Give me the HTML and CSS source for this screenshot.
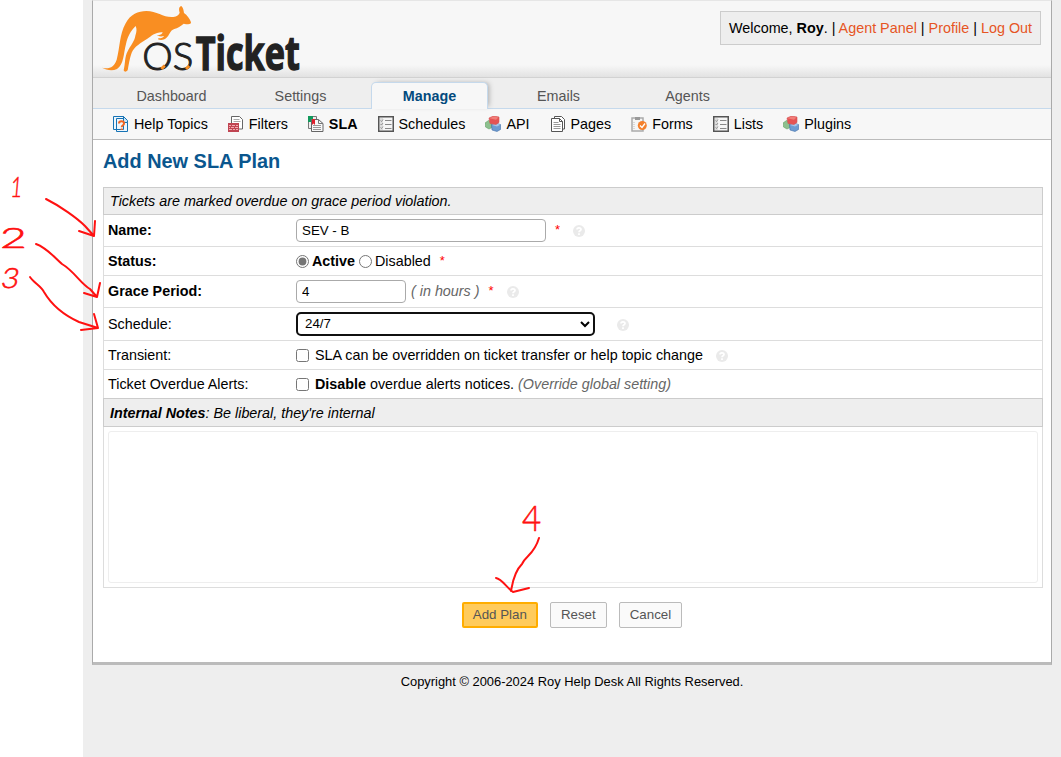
FILE: index.html
```html
<!DOCTYPE html>
<html lang="en">
<head>
<meta charset="utf-8">
<title>Add New SLA Plan</title>
<link rel="stylesheet" href="styles.css">
</head>
<body>
<svg class="defs" width="0" height="0">
  <symbol id="list" viewBox="0 0 16 16"><path d="M.75.75h14.5v14.5H.75z" fill="#f5f5f5" stroke="#555" stroke-width="1.5"/><path d="M2 2h3v12H2z" fill="#ddd"/><path d="M7 4.500h6.500M7 8.500h6.500M7 12.500h6.500" stroke="#888"/><path d="M2.500 4.500l1 1 1.500-2M2.500 8l1 1 1.500-2M2.500 11.500l1 1 1.500-2" fill="none" stroke="#777" stroke-width=".7"/></symbol>
  <symbol id="cubes" viewBox="0 0 16 16"><path d="M0 7l3.500-2.500L7 6v5.500l-3 1.500L.5 11z" fill="#8dc08e" stroke="#65a268" stroke-width=".6"/><path d="M6.500 8.500l4-1.500 5 1.500v5l-3.500 2-5-1.500z" fill="#6d9bd1" stroke="#426fa7" stroke-width=".6"/><path d="M7 9l5 1.500 3.300-1.800L11 7z" fill="#a5c4e8"/><path d="M4 2l4.500-2 5.500 1v5.500L11 8.500 5 7.500z" fill="#e55353" stroke="#d35454" stroke-width=".6"/><path d="M4.500 2.200l4-1.700 5 1L11 3.700z" fill="#f17e79"/></symbol>
  <symbol id="help" viewBox="0 0 12 12"><circle cx="6" cy="6" r="6" fill="#eaeaea"/><path d="M4 4.600C4 2.300 8 2.300 8 4.500 8 5.800 6 5.800 6 7.200" fill="none" stroke="#fff" stroke-width="1.700"/><path d="M5.100 8.200h1.800v1.700H5.100z" fill="#fff"/></symbol>
</svg>
<div class="page">
  <div class="container">
    <header class="header">
      <svg class="logo" viewBox="27 3 639 228" role="img" aria-label="osTicket">
        <path class="roo" d="M54 203C75 209 91 201 98 179C108 143 106 104 125 70C139 43 163 33 187 33C220 33 240 54 268 51C279 50 285 44 287 38C283 27 286 19 292 18C298 23 299 32 300 39C309 45 318 57 321 67C321 74 312 74 299 71C290 78 281 84 271 87C257 91 258 105 246 115C239 121 228 121 222 118L224 114C232 116 237 113 240 108C231 111 222 109 219 105C228 107 235 102 236 97C213 96 202 109 190 116C171 128 151 139 143 158C137 174 134 194 131 211C126 217 121 216 119 211C124 191 122 169 131 154C139 137 152 123 154 107C158 97 159 86 155 78C139 94 131 110 126 132C118 163 120 193 99 207C84 214 67 210 54 203Z"/>
        <text class="os" x="175" y="211" textLength="153" lengthAdjust="spacingAndGlyphs">OS</text>
        <text class="ticket" x="335" y="211" textLength="313" lengthAdjust="spacingAndGlyphs">Ticket</text>
        <path class="spark" d="M232 207l10-10M306 207l10-9"/>
      </svg>
      <p class="welcome">Welcome, <b>Roy</b>. | <a>Agent Panel</a> | <a>Profile</a> | <a>Log Out</a></p>
    </header>
    <nav class="tabs"><a>Dashboard</a><a>Settings</a><a class="active">Manage</a><a>Emails</a><a>Agents</a></nav>
    <nav class="subnav">
      <a><svg viewBox="0 0 16 16"><path d="M.5.5h10v13H.5zM3.500 2.500h7l4 4v9h-11z" fill="#eef6fc" stroke="#1673b5"/><path d="M10.500.5l4 4v2h-4z" fill="#cbe3f4" stroke="#1673b5"/><path d="M6 7.500c0-3 5-3 5 0 0 2-2.300 1.500-2.300 3.800M8.700 12.500v1.500" fill="none" stroke="#f26522" stroke-width="2"/></svg>Help Topics</a>
      <a><svg viewBox="0 0 16 16"><path d="M3.500 8V.5h8l3 3v9.500h-4" fill="#fff" stroke="#666"/><path d="M5.500 3.500h6M5.500 5.500h7" stroke="#aaa"/><path d="M0 7h11v9H0z" fill="#c04552"/><path d="M1 9.500h2m1 0h3m1 0h2M1 11.500h1m1 0h3m1 0h3M1 13.500h3m1 0h2m1 0h2" stroke="#f3aab1"/></svg>Filters</a>
      <a class="current"><svg viewBox="0 0 16 16"><path d="M.5.5h8v12h-8z" fill="#eee" stroke="#777"/><path d="M0 0h5v6H0z" fill="#11995b"/><path d="M3.500 3.500h7l4.500 4v8H3.500z" fill="#f8f8f8" stroke="#666"/><path d="M10.500 3.500v4H15" fill="none" stroke="#777"/><path d="M5 9.500h8M5 11.500h8M5 13.500h8" stroke="#999"/><path d="M4 3h3v6L5.500 7.500 4 9z" fill="#e0202d"/></svg>SLA</a>
      <a><svg><use href="#list"/></svg>Schedules</a>
      <a><svg><use href="#cubes"/></svg>API</a>
      <a><svg viewBox="0 0 16 16"><path d="M4.500 2.500v-2h7l3 3v9.500h-2M1.500 2.500h8l3 3v10h-11z" fill="#fff" stroke="#555"/><path d="M9.500 2.500v3h3" fill="none" stroke="#555"/><path d="M3.500 6.500h5M3.500 8.500h7M3.500 10.500h7M3.500 12.500h7" stroke="#999"/></svg>Pages</a>
      <a><svg viewBox="0 0 16 16"><path d="M1 2h11v13H1z" fill="#f5f5f5" stroke="#aaa" stroke-width="1.500"/><path d="M4 1h5v3H4z" fill="#999"/><path d="M3 6v8" stroke="#bbb" stroke-dasharray="1"/><circle cx="11.300" cy="9.500" r="4.500" fill="#f4802c"/><path d="M9 9.500l2 2 3-4" fill="none" stroke="#fff" stroke-width="1.300"/></svg>Forms</a>
      <a><svg><use href="#list"/></svg>Lists</a>
      <a><svg><use href="#cubes"/></svg>Plugins</a>
    </nav>
    <main class="content">
      <h1>Add New SLA Plan</h1>
      <form class="form">
        <div class="section"><em>Tickets are marked overdue on grace period violation.</em></div>
        <div class="row r32"><label><b>Name:</b></label><div class="field"><input class="box name" value="SEV - B"><i class="req m9">*</i><svg class="help m13"><use href="#help"/></svg></div></div>
        <div class="row r29"><label><b>Status:</b></label><div class="field status"><input type="radio" name="status" checked><b>Active</b><input class="second" type="radio" name="status"><span>Disabled</span><i class="req m9">*</i></div></div>
        <div class="row r32"><label><b>Grace Period:</b></label><div class="field"><input class="box grace" value="4"><em class="faded m5">( in hours )</em><i class="req m9">*</i><svg class="help m13"><use href="#help"/></svg></div></div>
        <div class="row r33"><label>Schedule:</label><div class="field"><select class="schedule"><option>24/7</option></select><svg class="help m22"><use href="#help"/></svg></div></div>
        <div class="row r29"><label>Transient:</label><div class="field"><input type="checkbox"><span>SLA can be overridden on ticket transfer or help topic change</span><svg class="help m13"><use href="#help"/></svg></div></div>
        <div class="row r29"><label>Ticket Overdue Alerts:</label><div class="field"><input type="checkbox"><span><b>Disable</b> overdue alerts notices. <em class="faded">(Override global setting)</em></span></div></div>
        <div class="section notes-head"><em><b>Internal Notes</b>: Be liberal, they're internal</em></div>
        <div class="notes"><textarea></textarea></div>
      </form>
      <div class="actions"><button class="primary">Add Plan</button><button>Reset</button><button>Cancel</button></div>
    </main>
  </div>
  <footer>Copyright © 2006-2024 Roy Help Desk All Rights Reserved.</footer>
</div>
<svg class="ink" viewBox="0 0 1061 757">
  <g class="strokes">
    <path d="M46 199C60 206 77 218 85 226L94 236M79 231l15 5 1-15"/>
    <path d="M36 244C47 248 54 257 62 264C74 271 81 284 90 289L97 297M84 293l13 4 3-14"/>
    <path d="M30 277C34 283 41 286 44 292C54 309 68 317 79 322L98 328M81 330l17-2-4-14"/>
    <path d="M539 538C534 555 526 555 522 564C513 573 512 587 511 591M496 578C502 579 507 588 513 592L529 588"/>
  </g>
  <text transform="translate(10 197) skewX(-5) scale(.700 1)">1</text>
  <text transform="translate(0 248) scale(1.650 1)">2</text>
  <text transform="translate(0 288) skewX(-10) scale(1.100 1)">3</text>
  <text transform="translate(522 531) scale(.920 1)" class="four">4</text>
</svg>
</body>
</html>
```
FILE: styles.css
```css
* { box-sizing: border-box; }
body { margin: 0; padding-left: 83px; height: 757px; overflow: hidden; background: #fff; font: 14.330px/16px "Liberation Sans", Arial, sans-serif; color: #000; }
.defs { position: absolute; }
.page { height: 757px; padding: 0 9px; background: #eee; }
.container { width: 960px; height: 665px; border: solid #aaa; border-width: 1px 1px 3px; border-top-color: #e6e6e6; border-bottom-color: #bbb; background: #fff; }
.header { height: 77px; display: flex; justify-content: space-between; align-items: flex-start; background: linear-gradient(#f7f7f7 0 64px, #e2e2e2 76px); border-bottom: 1px solid #d2d2d2; }
.logo { width: 213px; height: 76px; overflow: visible; }
.roo { fill: #f98e22; }
.spark { stroke: #f98e22; stroke-width: 9px; }
.os { font: 300 112px/1 Lato, sans-serif; fill: #222; stroke: #222; stroke-width: 3px; }
.ticket { font: 700 138px/1 "Open Sans", sans-serif; fill: #222; stroke: #222; stroke-width: 4px; }
.welcome { margin: 10px 10px 0 0; padding: 8px 8px 0; width: 321px; height: 34px; white-space: nowrap; background: #eee; border: 1px solid #ccc; font-size: 14.360px; }
.welcome a { color: #e65524; }
.tabs { height: 31px; padding: 4px 0 0 20px; display: flex; gap: 12px; background: #eee; border-bottom: 1px solid #c5d9ec; }
.tabs a { width: 117px; height: 27px; padding-top: 6px; text-align: center; color: #555; }
.tabs .active { border: 1px solid #c5d9ec; border-bottom: 0; border-radius: 5px 5px 0 0; background: #f7f7f7; color: #034a7d; font-weight: bold; box-shadow: 3px -1px 5px -2px #aaa; padding-top: 5px; }
.subnav { height: 31px; padding: 0 0 0 20px; display: flex; gap: 20px; align-items: center; background: #f7f7f7; border-bottom: 1px solid #bbb; }
.subnav a { display: flex; align-items: center; gap: 5px; }
.subnav svg { width: 16px; height: 16px; }
.current { font-weight: bold; }
.content { padding: 11px 8px 0 10px; }
h1 { margin: 0 0 16px; font-size: 19.900px; line-height: 20px; color: #0a568e; }
.form { width: 940px; height: 401px; border: 1px solid #ddd; border-top: 0; }
.section { height: 28px; margin: 0 -1px; padding: 5px 6px 0; background: #eee; border: 1px solid #ccc; }
.notes-head { padding: 6px 6px 0; margin-top: -1px; height: 29px; }
.row { display: flex; align-items: center; border-bottom: 1px solid #ddd; padding-left: 4px; }
.row label { width: 188px; }
.field { display: flex; align-items: center; }
.r32 { height: 32px; padding-bottom: 1px; }
.r29 { height: 29px; }
.r33 { height: 33px; }
input[type="checkbox"], input[type="radio"] { width: 13px; height: 13px; margin: 0 6px 0 0; accent-color: #757575; }
input[type="radio"] { margin-right: 3px; }
input.second { margin-left: 4px; }
.box { height: 23px; padding: 0 5px; border: 1px solid #aaa; border-radius: 4px; font: 13.330px "Liberation Sans", Arial, sans-serif; }
.name { width: 250px; }
.grace { width: 110px; }
.schedule { width: 299px; height: 24px; padding: 0 3px 1px; border: 2px solid #101010; border-radius: 5px; background: #fff; font: 13.330px "Liberation Sans", Arial, sans-serif; color: #000; }
.req { color: red; font-style: normal; font-size: 13px; }
.help { width: 12px; height: 12px; margin-top: 1px; }
.m5 { margin-left: 5px; }
.m9 { margin-left: 9px; }
.m13 { margin-left: 13px; }
.m22 { margin-left: 22px; }
.faded { color: #666; }
.notes { height: 160px; padding: 4px; }
textarea { display: block; width: 930px; height: 152px; resize: none; border: 1px solid #eee; border-radius: 3px; }
.actions { display: flex; justify-content: center; gap: 12px; margin: 14px 2px 0 0; }
button { height: 26px; padding: 0 10px 1px; border: 1px solid #bbb; border-radius: 2px; background: #fafafa; color: #555; font: 13.330px "Liberation Sans", Arial, sans-serif; }
.primary { border: 2px solid #ffad00; background: #ffcb5c; padding: 0 9px 1px; }
footer { padding-top: 9px; text-align: center; font-size: 12.900px; }
.ink { position: absolute; left: 0; top: 0; width: 1061px; height: 757px; pointer-events: none; }
.strokes { fill: none; stroke: #f11; stroke-width: 2px; stroke-linecap: round; stroke-linejoin: round; }
.ink text { font: 300 28px Lato, sans-serif; fill: #f11; stroke: #f11; stroke-width: .6px; }
.ink .four { font-size: 36px; }
```
